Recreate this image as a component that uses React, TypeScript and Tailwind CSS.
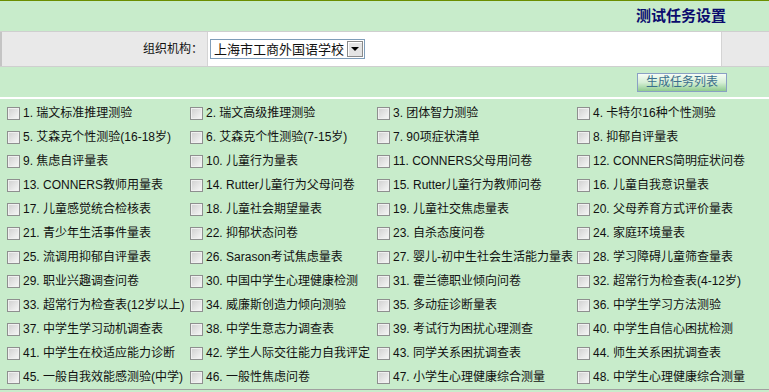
const tests = [
  "瑞文标准推理测验",
  "瑞文高级推理测验",
  "团体智力测验",
  "卡特尔16种个性测验",
  "艾森克个性测验(16-18岁)",
  "艾森克个性测验(7-15岁)",
  "90项症状清单",
  "抑郁自评量表",
  "焦虑自评量表",
  "儿童行为量表",
  "CONNERS父母用问卷",
  "CONNERS简明症状问卷",
  "CONNERS教师用量表",
  "Rutter儿童行为父母问卷",
  "Rutter儿童行为教师问卷",
  "儿童自我意识量表",
  "儿童感觉统合检核表",
  "儿童社会期望量表",
  "儿童社交焦虑量表",
  "父母养育方式评价量表",
  "青少年生活事件量表",
  "抑郁状态问卷",
  "自杀态度问卷",
  "家庭环境量表",
  "流调用抑郁自评量表",
  "Sarason考试焦虑量表",
  "婴儿-初中生社会生活能力量表",
  "学习障碍儿童筛查量表",
  "职业兴趣调查问卷",
  "中国中学生心理健康检测",
  "霍兰德职业倾向问卷",
  "超常行为检查表(4-12岁)",
  "超常行为检查表(12岁以上)",
  "威廉斯创造力倾向测验",
  "多动症诊断量表",
  "中学生学习方法测验",
  "中学生学习动机调查表",
  "中学生意志力调查表",
  "考试行为困扰心理测查",
  "中学生自信心困扰检测",
  "中学生在校适应能力诊断",
  "学生人际交往能力自我评定",
  "同学关系困扰调查表",
  "师生关系困扰调查表",
  "一般自我效能感测验(中学)",
  "一般性焦虑问卷",
  "小学生心理健康综合测量",
  "中学生心理健康综合测量",
];

function Check() {
  return (
    <span className="w-[13px] h-[13px] shrink-0 border border-[#8e8f8f] bg-gradient-to-br from-[#cfcfcf] to-[#f8f8f8] shadow-[inset_0_0_0_1px_#f0f0f0]" />
  );
}

export default function App() {
  return (
    <div className="w-[769px] h-[392px] overflow-hidden bg-[#C8ECCB] border-t border-[#6B8E00] text-[12px] text-[#111] font-['Liberation_Sans','Noto_Sans_CJK_SC',sans-serif]">
      {/* title */}
      <div className="h-[30px] flex items-center justify-end pr-[43px]">
        <span className="text-[15px] font-bold text-[#0b0b6e]">测试任务设置</span>
      </div>

      {/* org row */}
      <div className="h-[36px] flex border-y border-[#cfcfcf]">
        <div className="w-[207px] bg-[#E9E9E9] border-l-2 border-[#c4c4c4] flex items-center justify-end pr-[4px]">
          组织机构：
        </div>
        <div className="flex-1 bg-white border-x border-[#d4d4d4] flex items-center pl-[2px]">
          <div className="h-[20px] w-[155px] flex items-stretch border border-[#7f9db9] bg-white">
            <span className="flex-1 flex items-center pl-[3px] text-[13px] leading-none whitespace-nowrap">上海市工商外国语学校</span>
            <span className="w-[16px] m-[1px] shrink-0 flex items-center justify-center bg-[#e4e4e4] border border-[#8a8a8a] shadow-[inset_1px_1px_0_#fff]">
              <span className="w-0 h-0 border-x-[4px] border-x-transparent border-t-[4px] border-t-black" />
            </span>
          </div>
        </div>
        <div className="w-[47px] bg-[#E9E9E9]" />
      </div>

      {/* button row */}
      <div className="h-[30px] flex items-center justify-end pr-[42px]">
        <button className="w-[90px] h-[19px] flex items-center justify-center border border-[#8aa0c4] bg-gradient-to-b from-[#f6fcf6] via-[#d6efd6] to-[#8fcb8f] text-[12px] text-[#3b6e8c] leading-none">
          生成任务列表
        </button>
      </div>

      <div className="h-[2px] bg-white" />

      {/* test list */}
      <div className="mt-[2px] pl-[7px] grid grid-cols-[183px_187px_200px_1fr] auto-rows-[24px] border-b border-[#a0a0a0]">
        {tests.map((t, i) => (
          <label key={i} className="flex items-center gap-[3px] whitespace-nowrap">
            <Check />
            <span>
              {i + 1}. {t}
            </span>
          </label>
        ))}
      </div>
    </div>
  );
}
